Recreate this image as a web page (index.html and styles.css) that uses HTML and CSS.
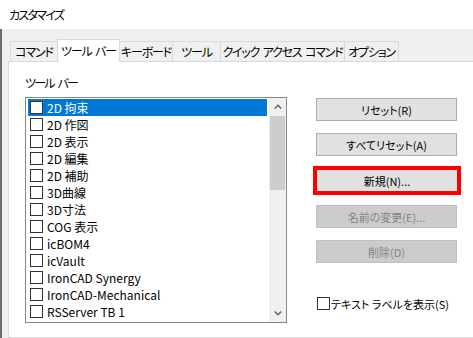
FILE: index.html
```html
<!DOCTYPE html>
<html lang="ja">
<head>
<meta charset="utf-8">
<title>カスタマイズ</title>
<link rel="stylesheet" href="styles.css">
</head>
<body>
<div class="window">
  <div class="titlebar">カスタマイズ</div>
  <div class="client">
    <div class="tabs">
      <div class="tab">コマンド</div>
      <div class="tab active">ツール バー</div>
      <div class="tab">キーボード</div>
      <div class="tab">ツール</div>
      <div class="tab">クイック アクセス コマンド</div>
      <div class="tab">オプション</div>
    </div>
    <div class="panel">
      <div class="left">
        <div class="label">ツール バー</div>
        <div class="listbox">
          <ul class="items">
            <li class="item selected"><span class="cb"></span>2D 拘束</li>
            <li class="item"><span class="cb"></span>2D 作図</li>
            <li class="item"><span class="cb"></span>2D 表示</li>
            <li class="item"><span class="cb"></span>2D 編集</li>
            <li class="item"><span class="cb"></span>2D 補助</li>
            <li class="item"><span class="cb"></span>3D曲線</li>
            <li class="item"><span class="cb"></span>3D寸法</li>
            <li class="item"><span class="cb"></span>COG 表示</li>
            <li class="item"><span class="cb"></span>icBOM4</li>
            <li class="item"><span class="cb"></span>icVault</li>
            <li class="item"><span class="cb"></span>IronCAD Synergy</li>
            <li class="item"><span class="cb"></span>IronCAD-Mechanical</li>
            <li class="item"><span class="cb"></span>RSServer TB 1</li>
          </ul>
          <div class="scrollbar">
            <div class="arrow">
              <svg width="8" height="5" viewBox="0 0 8 5"><path d="M0.8 4.4 L4 1.3 L7.2 4.4" fill="none" stroke="#606060" stroke-width="1.4"/></svg>
            </div>
            <div class="track"><div class="thumb"></div></div>
            <div class="arrow">
              <svg width="8" height="5" viewBox="0 0 8 5"><path d="M0.8 0.6 L4 3.7 L7.2 0.6" fill="none" stroke="#606060" stroke-width="1.4"/></svg>
            </div>
          </div>
        </div>
      </div>
      <div class="right">
        <div class="buttons">
          <div class="btn">リセット(R)</div>
          <div class="btn">すべてリセット(A)</div>
          <div class="highlight"><div class="btn inner">新規(N)...</div></div>
          <div class="btn disabled">名前の変更(E)...</div>
          <div class="btn disabled">削除(D)</div>
        </div>
        <div class="check"><span class="cb"></span>テキスト ラベルを表示(S)</div>
      </div>
    </div>
  </div>
</div>
</body>
</html>
```

FILE: styles.css
```css
* { box-sizing: border-box; }
html, body {
  margin: 0;
  padding: 0;
}
body {
  width: 473px;
  height: 338px;
  overflow: hidden;
  background: #f0f0f0;
  font-family: "Noto Sans CJK JP", "Noto Sans", sans-serif;
  font-feature-settings: "palt";
  font-size: 12px;
  color: #000;
}
.window {
  width: 473px;
  height: 338px;
  display: flex;
  flex-direction: column;
  overflow: hidden;
}
.titlebar {
  height: 29px;
  background: #fff;
  padding-left: 9px;
  line-height: 30px;
  font-size: 12px;
  letter-spacing: -1.7px;
}
.client {
  flex: 1;
  border-left: 2px solid #6b6b6b;
  display: flex;
  flex-direction: column;
  min-width: 0;
}
.tabs {
  display: grid;
  grid-template-columns: 47px 62px 53px 48px 124px 54px;
  align-items: end;
  padding: 10px 0 0 8px;
}
.tab {
  height: 20px;
  line-height: 19px;
  border: 1px solid #d9d9d9;
  border-bottom: none;
  background: #f0f0f0;
  margin-right: -1px;
  text-align: center;
  white-space: nowrap;
  letter-spacing: -1.2px;
  word-spacing: 2px;
}
.tab.active {
  position: relative;
  z-index: 1;
  height: 23px;
  line-height: 22px;
  background: #fff;
  margin-bottom: -1px;
}
.panel {
  flex: 1;
  width: 600px;
  margin-left: 6px;
  background: #fff;
  border: 1px solid #d9d9d9;
  display: flex;
}
.left {
  padding: 13px 0 0 16px;
}
.label {
  height: 16px;
  line-height: 16px;
  margin-bottom: 6px;
  letter-spacing: -1.8px;
  word-spacing: 3px;
}
.listbox {
  width: 262px;
  height: 226px;
  border: 1px solid #828790;
  display: flex;
}
.items {
  flex: 1;
  list-style: none;
  margin: 0;
  padding: 1px 2px 0 2px;
}
.item {
  height: 17px;
  display: flex;
  align-items: center;
  padding-left: 2px;
  gap: 4px;
  white-space: nowrap;
}
.item.selected {
  background: #0078d7;
  color: #fff;
}
.cb {
  width: 13px;
  height: 13px;
  border: 1px solid #333;
  background: #fff;
  flex: none;
}
.scrollbar {
  width: 17px;
  background: #f0f0f0;
  display: flex;
  flex-direction: column;
}
.arrow {
  height: 17px;
  display: flex;
  align-items: center;
  justify-content: center;
}
.track {
  flex: 1;
  padding: 1px 1px 0 1px;
}
.thumb {
  height: 74px;
  background: #cdcdcd;
}
.right {
  margin-left: 29px;
  padding-top: 36px;
}
.buttons {
  display: flex;
  flex-direction: column;
  gap: 12px;
  width: 141px;
}
.btn {
  height: 23px;
  border: 1px solid #adadad;
  background: #e1e1e1;
  font-size: 11px;
  display: flex;
  align-items: center;
  justify-content: center;
  white-space: nowrap;
}
.btn.disabled {
  background: #cccccc;
  border-color: #bfbfbf;
  color: #838383;
}
.highlight {
  border: 4px solid #ff0000;
  margin: -2px -4px -2px -3px;
}
.btn.inner {
  border: none;
  height: 21px;
}
.check {
  margin-top: 34px;
  margin-left: 1px;
  height: 13px;
  display: flex;
  align-items: center;
  gap: 1px;
  font-size: 11px;
  white-space: nowrap;
}
```
